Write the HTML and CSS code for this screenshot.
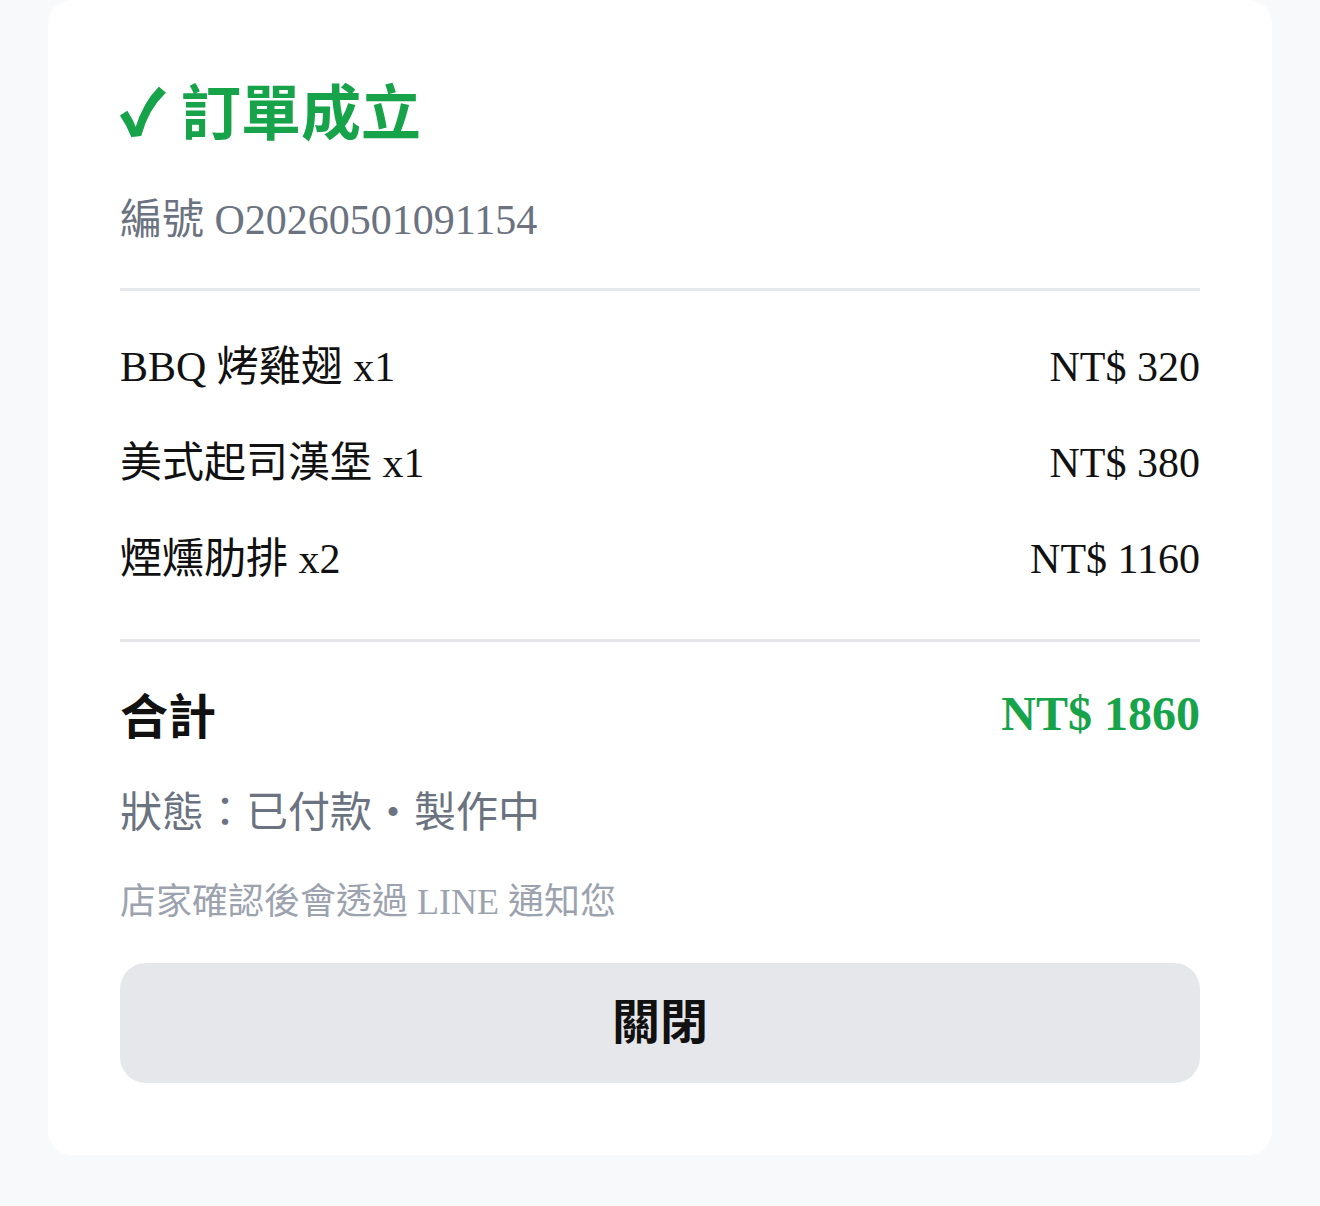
FILE: index.html
```html
<!DOCTYPE html>
<html lang="zh-Hant">
<head>
    <meta charset="UTF-8">
    <meta name="viewport" content="width=device-width, initial-scale=1.0">
    <title>訂單成立</title>
    <link rel="stylesheet" href="styles.css">
</head>
<body>
    <div class="card">
        <h1 class="title"><span class="check">✓</span> 訂單成立</h1>
        <div class="order-no">編號 O20260501091154</div>

        <hr class="divider">

        <div class="items">
            <div class="item-row">
                <span>BBQ 烤雞翅 x1</span>
                <span>NT$ 320</span>
            </div>
            <div class="item-row">
                <span>美式起司漢堡 x1</span>
                <span>NT$ 380</span>
            </div>
            <div class="item-row">
                <span>煙燻肋排 x2</span>
                <span>NT$ 1160</span>
            </div>
        </div>

        <hr class="divider">

        <div class="total-row">
            <span class="total-label">合計</span>
            <span class="total-price">NT$ 1860</span>
        </div>

        <div class="status">狀態：已付款・製作中</div>
        <div class="note">店家確認後會透過 LINE 通知您</div>

        <button class="close-btn">關閉</button>
    </div>
</body>
</html>
```

FILE: styles.css
```css
body {
    margin: 0;
    padding: 0;
    background-color: #f8f9fb;
    font-family: "Liberation Serif", "Noto Sans CJK TC", serif;
    color: #111;
}

.card {
    margin: 0 48px;
    padding: 72px 72px 72px;
    background-color: #fff;
    border-radius: 24px;
}

.title {
    margin: 0;
    font-family: "Noto Sans CJK TC", sans-serif;
    font-size: 60px;
    line-height: 74px;
    font-weight: 700;
    color: #16a34a;
}

.check {
    margin-left: 1px;
    margin-right: 3px;
    -webkit-text-stroke: 2px #16a34a;  /* 勾勾加粗 */
}

.order-no {
    margin-top: 44px;
    font-size: 42px;
    line-height: 60px;
    color: #6b7280;
}

.divider {
    margin: 38px 0 0;
    border: none;
    height: 3px;
    background-color: #e5e7eb;
}

.items {
    padding: 28px 0 32px;
}

.item-row {
    display: flex;
    justify-content: space-between;
    align-items: center;
    height: 96px;
    font-size: 42px;
    line-height: 60px;
}

.items + .divider {
    margin-top: 0;
}

.total-row {
    display: flex;
    justify-content: space-between;
    align-items: center;
    margin-top: 39px;
    height: 64px;
}

.total-label {
    font-family: "Noto Sans CJK TC", sans-serif;
    font-size: 48px;
    font-weight: 700;
    color: #111;
}

.total-price {
    font-size: 48px;
    font-weight: 700;
    color: #16a34a;
}

.status {
    margin-top: 38px;
    font-size: 42px;
    line-height: 60px;
    color: #6b7280;
}

.note {
    margin-top: 34px;
    font-size: 36px;
    line-height: 50px;
    color: #9ca3af;
}

.close-btn {
    display: block;
    width: 100%;
    height: 120px;
    margin-top: 36px;
    padding: 0 0 10px;
    border: none;
    border-radius: 26px;
    background-color: #e5e7eb;
    font-family: "Noto Sans CJK TC", sans-serif;
    font-size: 48px;
    font-weight: 700;
    color: #111;
    cursor: pointer;
}
```
